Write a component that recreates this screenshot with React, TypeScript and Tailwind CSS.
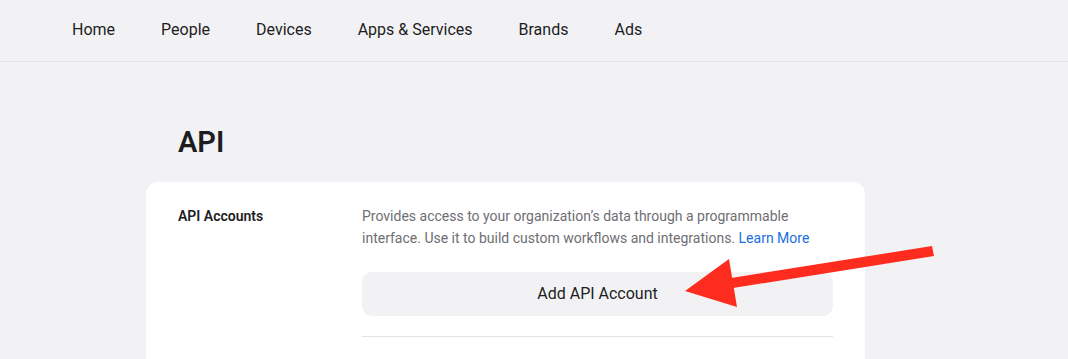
const NAV = ["Home", "People", "Devices", "Apps & Services", "Brands", "Ads"];

function Arrow() {
  return (
    <svg
      className="absolute left-0 top-0 pointer-events-none"
      width="1068"
      height="359"
      viewBox="0 0 1068 359"
    >
      <polygon points="932,246 934,256 733,288 731,278" fill="#fe2c1e" />
      <polygon points="685,291 729,259 737,307" fill="#fe2c1e" />
    </svg>
  );
}

export default function App() {
  return (
    <div
      className="relative w-[1068px] h-[359px] overflow-hidden bg-[#f2f2f4] text-[#1d1d1f]"
      style={{ fontFamily: "Roboto, 'Noto Sans', sans-serif" }}
    >
      {/* Top nav */}
      <header className="h-[62px] border-b border-[#e2e2e5] flex items-center pl-[72px] pb-[2px]">
        <nav className="flex items-center gap-[46px] text-[16px]">
          {NAV.map((item) => (
            <span key={item}>{item}</span>
          ))}
        </nav>
      </header>

      <div className="ml-[146px] w-[719px]">
        <h1 className="pl-8 pt-[62px] pb-[22px] text-[29px] leading-[36px] font-semibold">
          API
        </h1>

        {/* Settings card */}
        <div className="bg-white rounded-[12px] px-8 pt-[23px] pb-10">
          <div className="grid grid-cols-[184px_1fr]">
            <div className="text-[14px] leading-[22px] font-semibold">API Accounts</div>
            <div>
              <p className="text-[14px] leading-[22px] text-[#6e6e73]">
                Provides access to your organization’s data through a programmable
                interface. Use it to build custom workflows and integrations.{" "}
                <a className="text-[#1a6fe0]">Learn More</a>
              </p>
              <button className="mt-[23px] w-full h-[44px] rounded-[10px] bg-[#f2f2f4] text-[16px]">
                Add API Account
              </button>
              <div className="mt-[20px] border-t border-[#e2e2e5]" />
            </div>
          </div>
        </div>
      </div>

      <Arrow />
    </div>
  );
}
